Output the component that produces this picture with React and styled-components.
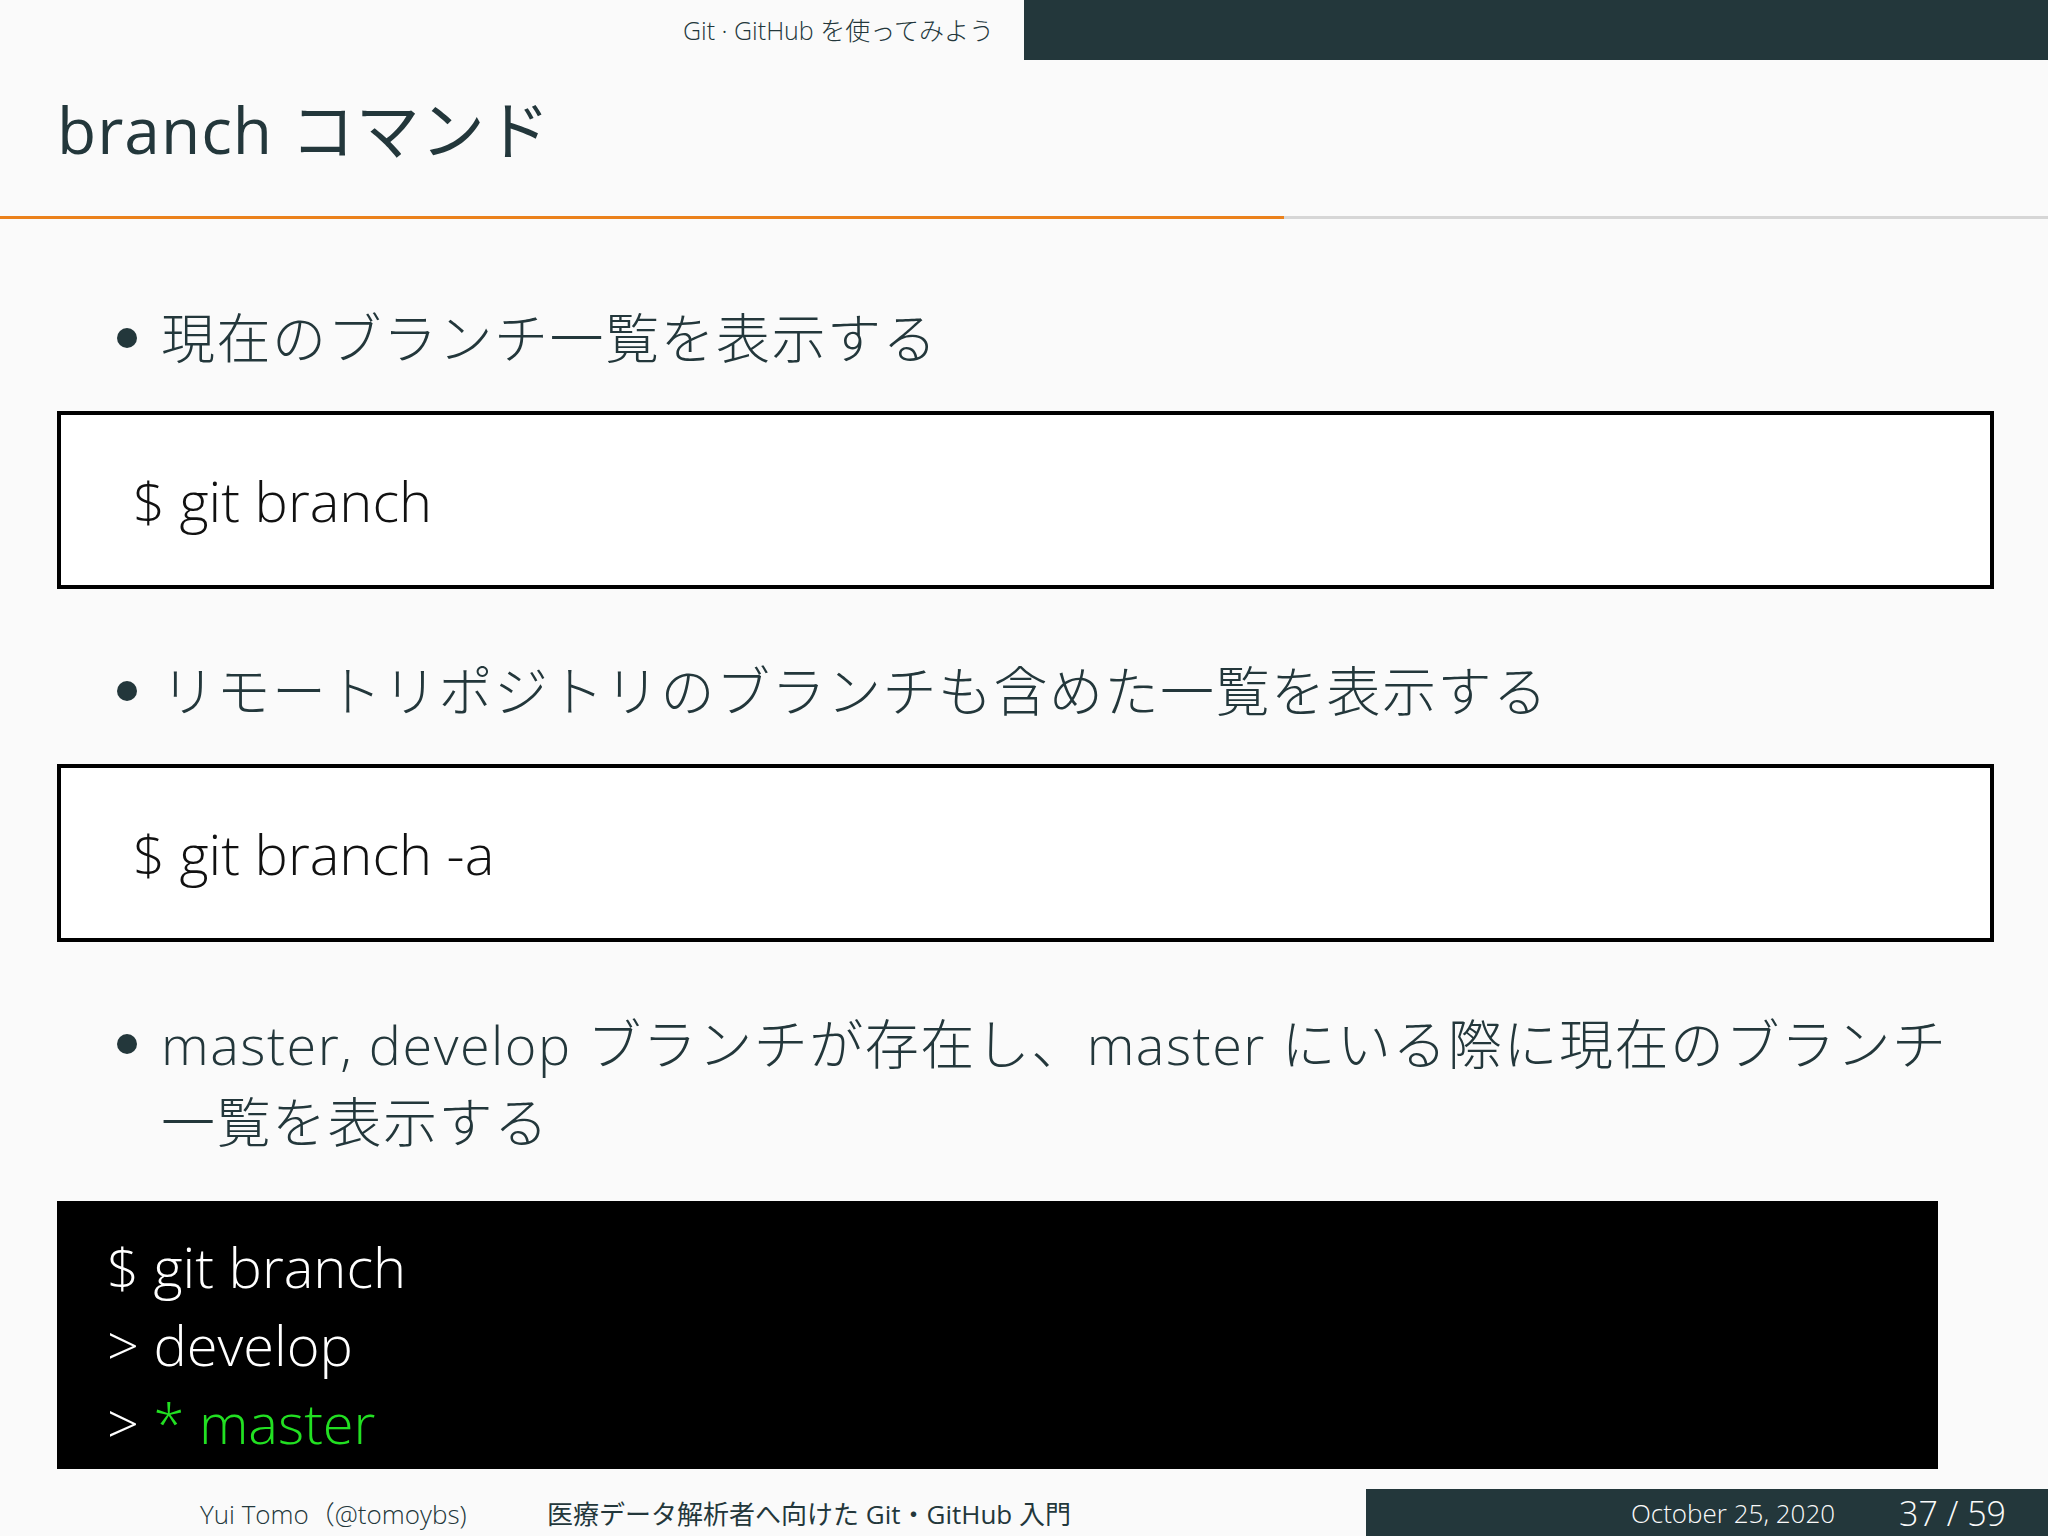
import React from "react";
import styled, { createGlobalStyle } from "styled-components";

const Global = createGlobalStyle`
  html, body { margin: 0; padding: 0; background: #fafafa; }
  body { font-family: "Open Sans", "Noto Sans CJK JP", sans-serif; color: #23373b; }
`;

const Slide = styled.div`
  width: 2048px; height: 1536px; background: #fafafa;
  display: flex; flex-direction: column; overflow: hidden;
`;
const TopBar = styled.div`display: flex; height: 60px;`;
const Section = styled.div`
  width: 1024px; box-sizing: border-box; padding-right: 30px;
  display: flex; justify-content: flex-end; align-items: center;
  height: 58px; font-size: 25px; font-weight: 300;
`;
const Dark = styled.div`flex: 1; background: #23373b;`;
const Title = styled.h1`
  margin: 0; padding: 38px 0 0 57px; height: 119px; box-sizing: border-box;
  font-size: 64px; font-weight: 400; line-height: 64px; letter-spacing: 1px;
`;
const Rule = styled.div`
  height: 3px; margin-top: 37px;
  background: linear-gradient(to right, #eb811b 0, #eb811b 1284px, #d6d6d6 1284px);
`;
const Body = styled.div`display: flex; flex-direction: column; padding: 0 0 0 57px;`;
const Bullet = styled.div`
  display: flex; align-items: flex-start; margin-top: ${p => p.$mt}px;
  padding-left: 60px; padding-right: 90px;
  font-size: 54px; font-weight: 300; line-height: 78px; letter-spacing: 1.5px;
  &::before { content: ""; flex: none; width: 20px; height: 20px; border-radius: 50%;
    background: #23373b; margin: 29px 24px 0 0; margin-left: 0; }
`;
const Box = styled.div`
  margin-top: ${p => p.$mt}px; width: 1937px; height: 178px; box-sizing: border-box;
  border: 4px solid #000; background: #fff; display: flex; align-items: center;
  padding-left: 72px; font-size: 56px; font-weight: 300; color: #111;
`;
const Term = styled.div`
  margin-top: 40px; width: 1881px; height: 268px; box-sizing: border-box; background: #000;
  padding: 26px 50px; color: #fff; font-size: 56px; font-weight: 300; line-height: 78px;
`;
const Green = styled.span`color: #22e022;`;
const Footer = styled.div`
  margin-top: auto; height: 47px; display: flex; align-items: center; font-size: 26px; font-weight: 300;
`;
const FootLeft = styled.div`width: 1366px; display: flex; align-items: center;`;
const Author = styled.span`padding-left: 200px; width: 547px; box-sizing: border-box;`;
const Course = styled.span`font-weight: 400;`;
const FootRight = styled.div`
  flex: 1; align-self: stretch; background: #23373b; color: #fafafa;
  display: flex; align-items: center; justify-content: flex-end; padding-right: 42px; gap: 64px;
`;
const Page = styled.span`font-size: 34px;`;

export default function App() {
  return (
    <Slide>
      <Global />
      <TopBar><Section>Git · GitHub を使ってみよう</Section><Dark /></TopBar>
      <Title>branch コマンド</Title>
      <Rule />
      <Body>
        <Bullet $mt={80}>現在のブランチ一覧を表示する</Bullet>
        <Box $mt={34}>$ git branch</Box>
        <Bullet $mt={63}>リモートリポジトリのブランチも含めた一覧を表示する</Bullet>
        <Box $mt={34}>$ git branch -a</Box>
        <Bullet $mt={63}>master, develop ブランチが存在し、master にいる際に現在のブランチ一覧を表示する</Bullet>
        <Term>
          <div>$ git branch</div>
          <div>&gt; develop</div>
          <div>&gt; <Green>* master</Green></div>
        </Term>
      </Body>
      <Footer>
        <FootLeft>
          <Author>Yui Tomo（@tomoybs)</Author>
          <Course>医療データ解析者へ向けた Git・GitHub 入門</Course>
        </FootLeft>
        <FootRight><span>October 25, 2020</span><Page>37 / 59</Page></FootRight>
      </Footer>
    </Slide>
  );
}
